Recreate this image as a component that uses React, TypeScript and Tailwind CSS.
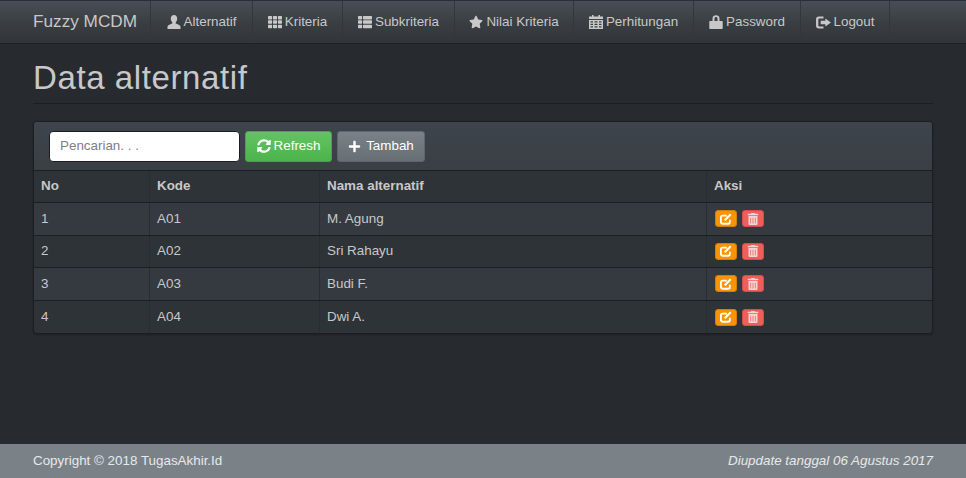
import { FaPlus, FaStar, FaSyncAlt, FaTh, FaThList, FaTrashAlt } from 'react-icons/fa';
import type { ReactNode } from 'react';

function UserIcon() {
  return (
    <svg viewBox="0 0 14 14" className="h-[14px] w-[14px]" fill="currentColor">
      <path d="M7 0C4.9 0 3.8 1.5 3.8 3.6c0 1.6.6 3 1.5 3.8v1.2C3.6 9.5.8 10 .5 11.4V14h13v-2.6c-.3-1.4-3.1-1.9-4.8-2.8V7.4c.9-.8 1.5-2.2 1.5-3.8C10.200 1.500 9.100 0 7 0z" />
    </svg>
  );
}

function CalendarIcon() {
  return (
    <svg viewBox="0 0 14 14" className="h-[14px] w-[14px]" fill="currentColor">
      <path d="M3 0h1.500v1.500H9.500V0H11v1.500h3V4H0V1.500h3z" />
      <path fillRule="evenodd" d="M0 5h14v9H0zM1.500 6.200v1.300h2.500V6.200zm4 0v1.300h3V6.200zm4.500 0v1.300h2.500V6.200zM1.500 8.800v1.300h2.500V8.800zm4 0v1.300h3V8.800zm4.500 0v1.300h2.500V8.800zM1.500 11.300v1.300h2.500v-1.300zm4 0v1.300h3v-1.300zm4.500 0v1.300h2.500v-1.300z" />
    </svg>
  );
}

function LockIcon() {
  return (
    <svg viewBox="0 0 14 14" className="h-[14px] w-[14px]" fill="currentColor">
      <path fillRule="evenodd" d="M3.500 6V3.500C3.500 1.500 5 .3 7 .3s3.500 1.200 3.500 3.200V6H13a.7.7 0 0 1 .7.7v6.600a.7.700 0 0 1-.7.700H1a.7.700 0 0 1-.7-.7V6.700A.7.700 0 0 1 1 6zm2-2.400V6h3V3.600c0-.9-.6-1.500-1.500-1.500s-1.500.6-1.500 1.500z" />
    </svg>
  );
}

function LogoutIcon() {
  return (
    <svg viewBox="0 0 16 14" className="h-[13px] w-[15px]" fill="currentColor">
      <path d="M3 0.500h5v2.200H3.400a1 1 0 0 0-1 1v6.600a1 1 0 0 0 1 1H8v2.200H3a3 3 0 0 1-3-3V3.500a3 3 0 0 1 3-3z" />
      <path d="M10 2.800 16 7l-6 4.200V9H5V5h5z" />
    </svg>
  );
}

function EditIcon() {
  return (
    <svg viewBox="0 0 14 14" className="h-[12px] w-[12px]" fill="none" stroke="currentColor">
      <path d="M11.500 8v2.500a2 2 0 0 1-2 2H3a2 2 0 0 1-2-2V5a2 2 0 0 1 2-2h5" strokeWidth="2.200" />
      <path d="M5.500 8.500 12.500 1.500" strokeWidth="2.400" />
    </svg>
  );
}

const menu: { label: string; icon: ReactNode; width: string }[] = [
  { label: 'Alternatif', icon: <UserIcon />, width: 'w-[102px]' },
  { label: 'Kriteria', icon: <FaTh size={14} />, width: 'w-[90px]' },
  { label: 'Subkriteria', icon: <FaThList size={14} />, width: 'w-[112px]' },
  { label: 'Nilai Kriteria', icon: <FaStar size={14} />, width: 'w-[119px]' },
  { label: 'Perhitungan', icon: <CalendarIcon />, width: 'w-[120px]' },
  { label: 'Password', icon: <LockIcon />, width: 'w-[107px]' },
  { label: 'Logout', icon: <LogoutIcon />, width: 'w-[89px]' },
];

const rows = [
  { no: 1, kode: 'A01', nama: 'M. Agung' },
  { no: 2, kode: 'A02', nama: 'Sri Rahayu' },
  { no: 3, kode: 'A03', nama: 'Budi F.' },
  { no: 4, kode: 'A04', nama: 'Dwi A.' },
];

export default function App() {
  return (
    <div className="flex h-[478px] w-[966px] flex-col overflow-hidden bg-[#272b30] font-['Liberation_Sans',Arial,sans-serif] text-[13.4px] text-[#c8c8c8]">
      <nav className="flex h-[44px] shrink-0 border-b border-[#1f2225] border-t border-t-[#2b2f33] bg-gradient-to-b from-[#484e55] via-[#3a3f44] to-[#313539] pl-[33px]">
        <div className="flex w-[118px] items-center border-r border-[#33373b] text-[17.2px] text-[#c8c8c8]">Fuzzy MCDM</div>
        {menu.map((item) => (
          <a key={item.label} className={`flex ${item.width} items-center justify-center gap-[3px] border-r border-[#33373b] text-[#c8c8c8]`}>
            {item.icon}
            {item.label}
          </a>
        ))}
      </nav>

      <main className="mx-[33px] flex flex-col">
        <h1 className="mt-[15px] h-[45px] border-b border-[#1c1e22] text-[33px] leading-[38px] tracking-[0.6px] text-[#c8c8c8]">Data alternatif</h1>

        <section className="mt-[17px] overflow-hidden rounded-[4px] border border-[#1c1e22] bg-[#2e3338] shadow-[0_1px_2px_rgba(0,0,0,0.3)]">
          <div className="flex h-[49px] items-center gap-[5px] border-b border-[#1c1e22] bg-gradient-to-b from-[#3e444c] to-[#3a3f44] pl-[15px]">
            <div className="flex h-[31px] w-[191px] items-center rounded-[4px] border border-[#1c1e22] bg-white px-[10px] text-[#7a8288]">Pencarian. . .</div>
            <button className="flex h-[31px] w-[87px] items-center justify-center gap-[3px] rounded-[3px] border border-[#4aa24a] bg-gradient-to-b from-[#62c462] to-[#4cb44c] text-white">
              <FaSyncAlt size={14} />
              Refresh
            </button>
            <button className="flex h-[31px] w-[88px] items-center justify-center gap-[5px] rounded-[3px] border border-[#5f666c] bg-gradient-to-b from-[#7a8288] to-[#676e74] text-white">
              <FaPlus size={13} />
              Tambah
            </button>
          </div>

          <div className="flex h-[32px] items-center border-b border-[#1c1e22] font-bold text-[#c8c8c8]">
            <div className="flex h-full w-[116px] items-center border-r border-[#292d31] pl-[7px]">No</div>
            <div className="flex h-full w-[170px] items-center border-r border-[#292d31] pl-[7px]">Kode</div>
            <div className="flex h-full w-[387px] items-center border-r border-[#292d31] pl-[7px]">Nama alternatif</div>
            <div className="pl-[7px]">Aksi</div>
          </div>

          {rows.map((row) => (
            <div key={row.no} className="flex h-[32.6px] items-center border-b border-[#1c1e22] odd:bg-[#353a41] last:border-b-0">
              <div className="flex h-full w-[116px] items-center border-r border-[#292d31] pl-[7px]">{row.no}</div>
              <div className="flex h-full w-[170px] items-center border-r border-[#292d31] pl-[7px]">{row.kode}</div>
              <div className="flex h-full w-[387px] items-center border-r border-[#292d31] pl-[7px]">{row.nama}</div>
              <div className="flex gap-[5px] pl-[8px]">
                <button className="flex h-[17px] w-[22px] items-center justify-center rounded-[3px] border border-[#d17f05] bg-[#f89406] text-white">
                  <EditIcon />
                </button>
                <button className="flex h-[17px] w-[22px] items-center justify-center rounded-[3px] border border-[#d44c4c] bg-[#ee5f5b] text-[#f7d3d3]">
                  <FaTrashAlt size={12} />
                </button>
              </div>
            </div>
          ))}
        </section>
      </main>

      <footer className="mt-auto flex h-[34px] items-center justify-between bg-[#7a8288] px-[33px] text-[#e8e8e8]">
        <span>Copyright © 2018 TugasAkhir.Id</span>
        <em>Diupdate tanggal 06 Agustus 2017</em>
      </footer>
    </div>
  );
}
